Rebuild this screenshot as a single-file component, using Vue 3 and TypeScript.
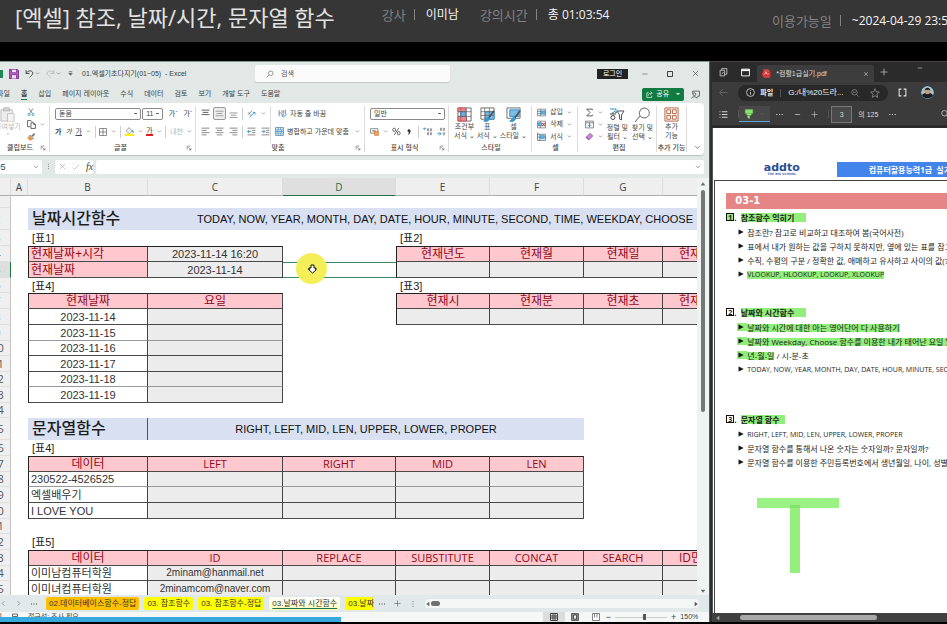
<script setup lang="ts">
import { h } from 'vue'

type Shape = [d: string, stroke: string, fill?: string, width?: number]

const dark = '#4a4d4c'
const blue = '#2f8fcb'
const light = '#d6d6d6'

const shapes: Record<string, Shape[]> = {
  save: [['M1 1h12l2 2v12H1z', '#8d3f9c', '#b569c3', 2], ['M4 1v5h8V1M4 15v-6h8v6', '#8d3f9c', '#f2e2f5', 1.5]],
  undo: [['M2 2v6h6M2 8c3-6 11-6 12-1 0 3-3 5-6 8', dark, 'none', 1.7]],
  redo: [['M14 2v6H8M14 8C11 2 3 2 2 7c0 3 3 5 6 8', '#b9bfbd', 'none', 1.7]],
  custom: [['M4 4h8', dark, 'none', 1.6], ['M4 8h8l-4 4z', dark, dark, 1]],
  search: [['M10 2a4.5 4.5 0 1 1-1 9 4.500 4.500 0 0 1 1-9zM6 10l-5 5', '#666', 'none', 1.3]],
  min: [['M1 8h14', '#333', 'none', 1.3]],
  max: [['M3 3h10v10H3z', '#222', 'none', 1.7]],
  close: [['M2 2l12 12M14 2L2 14', '#444', 'none', 1.4]],
  closeLight: [['M3 3l10 10M13 3L3 13', light, 'none', 1.5]],
  comment: [['M3 7V2h12v9h-3l-2 3', dark, 'none', 1.4], ['M6 5a2.500 2.500 0 1 1 0 5 2.500 2.500 0 0 1 0-5zM1 15c1-4 8-4 10 0', dark, 'none', 1.4]],
  share: [['M6 4H2v11h11v-4', '#fff', 'none', 1.5], ['M5 11c0-5 4-6 8-6M10 1l4 4-4 4', '#fff', 'none', 1.5]],
  paste: [['M1 3h12v12H1z', '#bdbdbd', '#ededed', 1], ['M4 1h6v3H4z', '#b0b0b0', '#ddd', 1], ['M8 7h7v9H8z', '#c2c2c2', '#f3f3f3', 1]],
  cut: [['M4 1l7 10M12 1L5 11', '#555', 'none', 1.3], ['M4 11a2 2 0 1 1-.1 4 2 2 0 0 1 .1-4zM12 11a2 2 0 1 1-.1 4 2 2 0 0 1 .1-4z', blue, 'none', 1.6]],
  copy: [['M6 12H1V1h6l3 3', '#444', 'none', 1.4], ['M7 5h5l3 3v7H7zM12 5v3h3', '#444', '#fff', 1.4]],
  brush: [['M10 5l4-4 1 2-3 4z', '#555', '#777', 1.3], ['M6 4l7 7-2 1-6-6z', '#555', '#fff', 1.2], ['M5 6l6 6-5 3-5-5z', '#c9722a', '#ef9b4d', 1]],
  border: [['M1 1h14v14H1zM8 1v14M1 8h14', '#555', 'none', 1.3]],
  fill: [['M7 1l6 6-5 5-6-5z', '#777', '#f4f4f4', 1.2], ['M13 6l2 4', blue, 'none', 2], ['M0 14h16', '#fff200', 'none', 4]],
  alignTop: [['M1 2h14M3 6h10M1 10h14', '#444', 'none', 1.5]],
  alignMid: [['M1 4h14M3 8h10M1 12h14', '#888', 'none', 1.3]],
  alignBot: [['M1 7h14M3 11h10M1 15h14', '#777', 'none', 1.3]],
  left: [['M1 2h14M1 6h9M1 10h14M1 14h9', '#555', 'none', 1.2]],
  center: [['M1 2h14M3 6h10M1 10h14M3 14h10', '#555', 'none', 1.2]],
  right: [['M1 2h14M6 6h9M1 10h14M6 14h9', '#555', 'none', 1.2]],
  orient: [['M2 10l7-7M5 12l3-3M2 6l3 3', '#666', 'none', 1.4], ['M5 15L14 6M14 10V6h-4', blue, 'none', 1.5]],
  indentL: [['M1 2h14M9 6h6M9 10h6M1 14h14', '#555', 'none', 1.2], ['M7 8H1M4 5L1 8l3 3', blue, 'none', 1.5]],
  indentR: [['M1 2h14M9 6h6M9 10h6M1 14h14', '#555', 'none', 1.2], ['M1 8h6M4 5l3 3-3 3', blue, 'none', 1.5]],
  wrap: [['M2 2v11M2 7h3M7 2v9M10 2v6M13 1v8', '#666', 'none', 1.3], ['M14 8c2 5-3 5-6 4M10 9l-3 3 3 3', blue, 'none', 1.6]],
  merge: [['M1 1h14v14H1z', '#4f7d9c', '#d9effb', 1.3], ['M1 5h14M1 11h14M6 1v4M10 1v4M6 11v4M10 11v4', '#4f7d9c', 'none', 1], ['M3 8h10M5 6L3 8l2 2M11 6l2 2-2 2', blue, 'none', 1.4]],
  money: [['M1 3h13v8H1z', '#666', '#fff', 1.3], ['M4 7h6', '#666', 'none', 2], ['M8 8h7v7H8z', '#c9722a', '#f0a050', 1]],
  percent: [['M4 2a2.500 3 0 1 1-.1 6 2.500 3 0 0 1 .1-6zM12 8a2.500 3 0 1 1-.1 6 2.500 3 0 0 1 .1-6zM12 2L4 14', '#444', 'none', 1.4]],
  comma: [['M8 3a2.500 2.500 0 0 1 2.500 3c0 4-2 6-4 7 1-2 2-3 1.500-5a2.500 2.500 0 0 1 0-5z', '#333', '#333', 1]],
  decInc: [['M8 3h2v4H8zM13 3h2v4h-2zM8 10h2v4H8zM13 10h2v4h-2z', '#666', 'none', 1.1], ['M6 3H1M3 1L1 3l2 2', blue, 'none', 1.5]],
  decDec: [['M8 2h2v4H8zM13 2h2v4h-2zM13 10h2v4h-2z', '#666', 'none', 1.1], ['M2 12h7M6 9l3 3-3 3', blue, 'none', 1.5]],
  cond: [['M1 1h14v14H1z', '#666', '#fff', 1], ['M1 1h8v4H1zM1 10h9v5H1z', '#e2525a', '#f4858b', 1], ['M4 5h5v5H4z', '#3d86c6', '#6cb0e4', 1], ['M1 5h14M1 10h14M4 1v14M10 1v14', '#666', 'none', .8]],
  tableFmt: [['M1 1h14v12H1z', '#666', '#fff', 1], ['M6 5h9v8H6z', blue, '#79bde9', 1], ['M1 5h14M1 9h14M5 1v12M10 1v12', '#666', 'none', .8], ['M15 4l-6 8', '#555', '#fff', 1.8], ['M9 11c-3 0-2 3-5 4 3 1 6 0 6-3z', blue, '#3c98d5', 1]],
  cellFmt: [['M1 1h14v11H1z', '#666', '#fff', 1], ['M4 3h10v7H4z', blue, '#79bde9', 1], ['M15 4l-6 8', '#555', '#fff', 1.8], ['M9 11c-3 0-2 3-5 4 3 1 6 0 6-3z', blue, '#3c98d5', 1]],
  insert: [['M1 2h14v12H1zM1 6h14M1 10h14M6 2v12', '#555', '#fff', 1.1], ['M7 5h8v6H7z', blue, '#5cb0e5', 1]],
  remove: [['M1 2h14v12H1zM1 6h14M1 10h14M6 2v12', '#555', '#fff', 1.1], ['M2 5h6v5H2z', blue, '#5cb0e5', 1], ['M9 5l6 6M15 5l-6 6', '#d33b3b', 'none', 1.6]],
  format: [['M1 1v14h14V4H1M5 4v11M1 9h14', '#555', 'none', 1.2], ['M6 6h7v6H6z', blue, '#5cb0e5', 1]],
  sum: [['M13 4V2H3l6 6-6 6h10v-2', '#444', 'none', 1.5]],
  fillDown: [['M1 2h14v12H1zM1 5h14', '#555', '#fff', 1.2], ['M8 5v7M5 9l3 3 3-3', blue, 'none', 1.7]],
  eraser: [['M9 2l5 5-7 7-5-5z', '#9b4fa8', '#c98bd2', 1.2], ['M2 9l5 5', '#9b4fa8', '#fff', 2]],
  sort: [['M1 2h6M7 2v3M5 4l2 2 2-2', blue, 'none', 1], ['M1 7h6M4 5v2M4 8.500a1.800 1.800 0 1 1-.1 4 1.800 1.800 0 0 1 .1-4z', '#444', 'none', 1], ['M8 4h7l-2.500 4v5l-2-1V8z', '#555', '#fff', 1]],
  find: [['M10 1a5 5 0 1 1-1 9.800A5 5 0 0 1 10 1zM6 9l-5 6', '#666', 'none', 1]],
  addin: [['M1 1h14v14H1z', '#b75c3c', '#fff', 1], ['M3 3h4v4H3zM9 3h4v4H9zM3 9h4v4H3zM9 9h4v4H9z', '#b75c3c', '#fff', 1]],
  launch: [['M3 12V3h9M6 6l7 7M13 8v5H8', '#555', 'none', 1.5]],
  check: [['M1 9l4 4L15 3', '#bbb', 'none', 1.4]],
  cancel: [['M2 2l12 12M14 2L2 14', '#aaa', 'none', 1.4]],
  chev: [['M3 5l5 5 5-5', '#666', 'none', 1.8]],
  prev: [['M10 3L5 8l5 5', '#777', 'none', 1.6]],
  next: [['M6 3l5 5-5 5', '#777', 'none', 1.6]],
  plus: [['M8 1v14M1 8h14', '#555', 'none', 1.3]],
  plusLight: [['M8 1v14M1 8h14', light, 'none', 1.3]],
  minusLight: [['M2 8h12', light, 'none', 1.6]],
  triL: [['M11 3v10L4 8z', '#666', '#666']],
  triLight: [['M11 3v10L4 8z', '#a9a9a9', '#a9a9a9']],
  triR: [['M5 3v10l7-5z', '#555', '#555']],
  triU: [['M3 11h10L8 4z', '#666', '#666']],
  triD: [['M3 5h10l-5 7z', '#666', '#666']],
  grid: [['M1 1h14v14H1zM1 6h14M1 10h14M6 1v14M10 1v14', '#333', '#eee', 1.8]],
  page: [['M1 1h14v14H1z', '#444', '#888', 1.5], ['M5 4h6v8H5z', '#333', '#eee', 1.5]],
  breaks: [['M1 1h14v14H1zM5 1v8M10 1v8', '#555', '#fff', 1.4]],
  work: [['M2 4h8v10H2zM5 4V1h9v10h-4', light, 'none', 1.4], ['M5 11l3-4', light, 'none', 1.4]],
  tabs: [['M1 2h14v12H1z', '#fff', 'none', 1.6], ['M1 4h14', '#fff', 'none', 3]],
  pdf: [['M3 1h8l3 3v11H3z', '#d94848', '#d94848'], ['M0 6h15v6H0z', '#c22a2a', '#d33'], ['M3 10c3-2 6-5 4-5s1 5 5 4', '#fff', 'none', 1.2]],
  back: [['M15 8H1M7 2L1 8l6 6', '#6d6d6d', 'none', 1.4]],
  info: [['M8 1a7 7 0 1 1-.1 14A7 7 0 0 1 8 1zM8 7v5M8 4v1.500', '#ececec', 'none', 1.3]],
  zoomOut: [['M7 1a5.500 5.500 0 1 1-.1 11A5.500 5.500 0 0 1 7 1zM11 11l4 4M4 6.500h6', '#999', 'none', 1.3]],
  star: [['M8 1l2 5 5 .500-4 3.500 1.500 5L8 12.300 3.500 15 5 10 1 6.500 6 6z', '#999', 'none', 1.2]],
  split: [['M6 2H2v12h4M10 2h4v12h-4', '#e6e6e6', 'none', 1.8]],
  list: [['M5 3h10M5 8h10M5 13h10M1 3h1.500M1 8h1.500M1 13h1.500', light, 'none', 1.8]],
  marker: [['M2 1h12v6H2z', '#6cc24f', '#8ce572', 1], ['M4 7h8l-1 3H5zM6 11h3v4l-3-1z', '#6cc24f', '#a7f08f', 1]],
  dots: [['M2 8h2M7 8h2M12 8h2', light, 'none', 2]],
  dotsDark: [['M2 8h2M7 8h2M12 8h2', '#444', 'none', 2]],
  dotsV: [['M8 2v2M8 7v2M8 12v2', '#777', 'none', 2]],
  find2: [['M7 1a5.500 5.500 0 1 1-.1 11A5.500 5.500 0 0 1 7 1zM11 11l4 4', light, 'none', 1.5]],
  tri: [['M2 2v12l12-6z', '#111', '#111']],
  person: [['M3 2h10v5H3zM2 14c0-5 12-5 12 0z', '#444', 'none', 1.5]],
}

const Ico = (props: { n: string; s?: number }) =>
  h(
    'svg',
    { class: 'ico', viewBox: '0 0 16 16', width: props.s ?? 8, height: props.s ?? 8, 'aria-hidden': 'true' },
    shapes[props.n].map(([d, stroke, fill, width]) =>
      h('path', { d, stroke, fill: fill ?? 'none', 'stroke-width': width ?? 1 })),
  )
Ico.props = ['n', 's']

interface Cell { t?: string; k?: string; span?: number }
interface Row { n: number; h: 'a' | 'b' | 'first' | 'title'; cells: Cell[] }

const columns = ['A', 'B', 'C', 'D', 'E', 'F', 'G', '']
const e: Cell = {}
const p = (t: string, extra = ''): Cell => ({ t, k: 'box pink ' + (/^[A-Z]+$/.test(t) ? 'latin ' : '') + extra })
const g = (t = '', extra = ''): Cell => ({ t, k: 'box gray ' + extra })
const w = (t: string, extra = ''): Cell => ({ t, k: 'box l ' + extra })
const cap = (t: string): Cell => ({ t, k: 'cap' })

const dateRow = (n: number, hh: 'a' | 'b', date: string, extra = ''): Row => ({
  n, h: hh, cells: [e, w(date, 'mid ' + extra), g('', extra), e, e, e, e, e],
})
const textRow = (n: number, hh: 'a' | 'b', text: string, extra = ''): Row => ({
  n, h: hh, cells: [e, w(text, extra), g('', extra), g('', extra), g('', extra), g('', extra), e, e],
})

const rows: Row[] = [
  { n: 1, h: 'first', cells: [e, e, e, e, e, e, e, e] },
  { n: 2, h: 'title', cells: [e, { t: '날짜시간함수', k: 'head' }, { t: 'TODAY, NOW, YEAR, MONTH, DAY, DATE, HOUR, MINUTE, SECOND, TIME, WEEKDAY, CHOOSE', k: 'fns', span: 6 }] },
  { n: 3, h: 'a', cells: [e, cap('[표1]'), e, e, cap('[표2]'), e, e, e] },
  { n: 4, h: 'a', cells: [e, p('현재날짜+시각', 'l t start'), g('2023-11-14 16:20', 't'), e, p('현재년도', 'l t'), p('현재월', 't'), p('현재일', 't'), p('현재', 't cut')] },
  { n: 5, h: 'a', cells: [e, p('현재날짜', 'l start'), g('2023-11-14'), { k: 'active' }, g('', 'l'), g(), g(), g()] },
  { n: 6, h: 'b', cells: [e, cap('[표4]'), e, e, cap('[표3]'), e, e, e] },
  { n: 7, h: 'a', cells: [e, p('현재날짜', 'l t'), p('요일', 't'), e, p('현재시', 'l t'), p('현재분', 't'), p('현재초', 't'), p('현재', 't cut')] },
  { n: 8, h: 'a', cells: [e, w('2023-11-14', 'mid'), g(), e, g('', 'l'), g(), g(), g()] },
  dateRow(9, 'a', '2023-11-15', 'soft'),
  dateRow(10, 'b', '2023-11-16'),
  dateRow(11, 'a', '2023-11-17'),
  dateRow(12, 'b', '2023-11-18', 'soft'),
  dateRow(13, 'a', '2023-11-19'),
  { n: 14, h: 'b', cells: [e, e, e, e, e, e, e, e] },
  { n: 15, h: 'title', cells: [e, { t: '문자열함수', k: 'head edge' }, { t: 'RIGHT, LEFT, MID, LEN, UPPER, LOWER, PROPER', k: 'fns', span: 4 }, e, e] },
  { n: 16, h: 'a', cells: [e, cap('[표4]'), e, e, e, e, e, e] },
  { n: 17, h: 'a', cells: [e, p('데이터', 'l t'), p('LEFT', 't'), p('RIGHT', 't'), p('MID', 't'), p('LEN', 't'), e, e] },
  textRow(18, 'b', '230522-4526525', 'soft'),
  textRow(19, 'a', '엑셀배우기'),
  textRow(20, 'a', 'I LOVE YOU'),
  { n: 21, h: 'b', cells: [e, e, e, e, e, e, e, e] },
  { n: 22, h: 'a', cells: [e, cap('[표5]'), e, e, e, e, e, e] },
  { n: 23, h: 'a', cells: [e, p('데이터', 'l t'), p('ID', 't'), p('REPLACE', 't'), p('SUBSTITUTE', 't'), p('CONCAT', 't'), p('SEARCH', 't'), p('ID민', 't cut')] },
  { n: 24, h: 'b', cells: [e, w('이미남컴퓨터학원'), g('2minam@hanmail.net', 'mail'), g(), g(), g(), g(), g()] },
  { n: 25, h: 'a', cells: [e, w('이미녀컴퓨터학원'), g('2minamcom@naver.com', 'mail'), g(), g(), g(), g(), g()] },
]

const menus = ['파일', '홈', '삽입', '페이지 레이아웃', '수식', '데이터', '검토', '보기', '개발 도구', '도움말']

interface Item { t: string; m?: string; all?: boolean }
const isLatin = (it: Item) => !/[가-힣]/.test(it.t + (it.m ?? ''))

const sections: { no: number; title: string; k: string; items: Item[] }[] = [
  {
    no: 1, title: '참조함수 익히기', k: 's1',
    items: [
      { t: '참조란? 참고로 비교하고 대조하여 봄(국어사전)' },
      { t: '표에서 내가 원하는 값을 구하지 못하지만, 옆에 있는 표를 참고' },
      { t: '수직, 수평의 구분 / 정확한 값, 애매하고 유사하고 사이의 값(?)' },
      { m: 'VLOOKUP, HLOOKUP, LOOKUP, XLOOKUP', t: '' },
    ],
  },
  {
    no: 2, title: '날짜와 시간함수', k: 's2',
    items: [
      { m: '날짜와 시간에 대한 아는 영어단어 다 사용하기', t: '', all: true },
      { m: '날짜와 Weekday, Choose 함수를 이용한 내가 태어난 요일 알아', t: '', all: true },
      { m: '년-월-일', t: ' / 시-분-초', all: true },
      { t: 'TODAY, NOW, YEAR, MONTH, DAY, DATE, HOUR, MINUTE, SECOND' },
    ],
  },
  {
    no: 3, title: '문자열 함수', k: 's3',
    items: [
      { t: 'RIGHT, LEFT, MID, LEN, UPPER, LOWER, PROPER' },
      { t: '문자열 함수를 통해서 나온 숫자는 숫자일까? 문자일까?' },
      { t: '문자열 함수를 이용한 주민등록번호에서 생년월일, 나이, 성별 알' },
    ],
  },
]
</script>

<template>
  <div class="player">
    <header class="top">
      <h1>[엑셀] 참조, 날짜/시간, 문자열 함수</h1>
      <dl class="meta">
        <div><dt>강사</dt><dd>이미남</dd></div>
        <div><dt>강의시간</dt><dd>총 01:03:54</dd></div>
      </dl>
      <dl class="meta until">
        <div><dt>이용가능일</dt><dd>~2024-04-29 23:59</dd></div>
      </dl>
    </header>

    <main class="stage">
      <section class="excel">
        <div class="titlebar">
          <span class="app-mark"></span>
          <button aria-label="저장"><Ico n="save" :s="10" /></button>
          <button aria-label="실행 취소"><Ico n="undo" :s="9" /><Ico n="chev" :s="5" /></button>
          <button aria-label="다시 실행"><Ico n="redo" :s="9" /><Ico n="chev" :s="5" /></button>
          <button aria-label="도구 모음 설정"><Ico n="custom" :s="7" /></button>
          <span class="file">01.엑셀기초다지기(01~05) &nbsp;- Excel</span>
          <label class="search"><Ico n="search" :s="8" /><input type="text" placeholder="검색" aria-label="검색" /></label>
          <button class="login">로그인</button>
          <div class="win">
            <button aria-label="최소화"><Ico n="min" :s="6" /></button>
            <button aria-label="최대화"><Ico n="max" :s="8" /></button>
            <button aria-label="닫기"><Ico n="close" :s="7" /></button>
          </div>
        </div>

        <nav class="menus">
          <a v-for="m in menus" :key="m" href="#" :class="{ on: m === '홈' }">{{ m }}</a>
          <button class="share"><Ico n="share" :s="7" />공유<i></i></button>
          <button aria-label="메모"><Ico n="comment" :s="9" /></button>
        </nav>

        <div class="ribbon">
          <div class="group clip">
            <div class="body">
              <button class="big faded"><Ico n="paste" :s="15" /><span>붙여넣기</span><Ico n="chev" :s="4" /></button>
              <div class="stack">
                <button aria-label="잘라내기"><Ico n="cut" :s="8" /></button>
                <button aria-label="복사"><Ico n="copy" :s="9" /><Ico n="chev" :s="5" /></button>
                <button aria-label="서식 복사"><Ico n="brush" :s="8" /></button>
              </div>
            </div>
            <div class="label"><b>클립보드</b><Ico n="launch" :s="6" /></div>
          </div>

          <div class="group font">
            <div class="body lines">
              <div class="line">
                <select class="wide" aria-label="글꼴"><option>돋움</option></select>
                <select class="size" aria-label="글꼴 크기"><option>11</option></select>
                <button>가<sup>ˆ</sup></button>
                <button>가<sup>ˇ</sup></button>
              </div>
              <div class="line spread">
                <button class="bold">가</button>
                <button class="ital">가</button>
                <button class="under">가</button>
                <Ico n="chev" :s="5" /><s></s>
                <button aria-label="테두리"><Ico n="border" :s="8" /></button><Ico n="chev" :s="5" /><s></s>
                <button aria-label="채우기 색"><Ico n="fill" :s="9" /></button><Ico n="chev" :s="5" />
                <button class="red">가</button><Ico n="chev" :s="5" /><s></s>
                <button class="faded">내천</button><Ico n="chev" :s="5" />
              </div>
            </div>
            <div class="label"><b>글꼴</b><Ico n="launch" :s="6" /></div>
          </div>

          <div class="group align">
            <div class="body">
              <div class="lines">
                <div class="line icons">
                  <button aria-label="위쪽 맞춤"><Ico n="alignTop" :s="9" /></button>
                  <button class="pressed" aria-label="가운데 맞춤"><Ico n="alignMid" :s="9" /></button>
                  <button aria-label="아래쪽 맞춤"><Ico n="alignBot" :s="9" /></button><s></s>
                  <button aria-label="방향"><Ico n="orient" :s="9" /></button>
                  <Ico n="chev" :s="5" />
                </div>
                <div class="line icons">
                  <button aria-label="왼쪽 맞춤"><Ico n="left" :s="9" /></button>
                  <button aria-label="가로 가운데"><Ico n="center" :s="9" /></button>
                  <button aria-label="오른쪽 맞춤"><Ico n="right" :s="9" /></button><s></s>
                  <button aria-label="내어쓰기"><Ico n="indentL" :s="9" /></button>
                  <button aria-label="들여쓰기"><Ico n="indentR" :s="9" /></button>
                </div>
              </div>
              <div class="lines rule">
                <button class="line"><Ico n="wrap" :s="9" />자동 줄 바꿈</button>
                <button class="line"><Ico n="merge" :s="9" />병합하고 가운데 맞춤<Ico n="chev" :s="5" /></button>
              </div>
            </div>
            <div class="label"><b>맞춤</b><Ico n="launch" :s="6" /></div>
          </div>

          <div class="group number">
            <div class="body lines">
              <div class="line"><select class="fmt" aria-label="표시 형식"><option>일반</option></select></div>
              <div class="line spread">
                <button aria-label="회계"><Ico n="money" :s="9" /></button><Ico n="chev" :s="5" />
                <button aria-label="백분율"><Ico n="percent" :s="9" /></button>
                <button aria-label="쉼표"><Ico n="comma" :s="8" /></button><s></s>
                <button aria-label="자릿수 늘림"><Ico n="decInc" :s="9" /></button>
                <button aria-label="자릿수 줄임"><Ico n="decDec" :s="9" /></button>
              </div>
            </div>
            <div class="label"><b>표시 형식</b><Ico n="launch" :s="6" /></div>
          </div>

          <div class="group styles">
            <div class="body">
              <button class="big"><Ico n="cond" :s="15" /><span>조건부</span><span>서식 ⌄</span></button>
              <button class="big"><Ico n="tableFmt" :s="15" /><span>표</span><span>서식 ⌄</span></button>
              <button class="big"><Ico n="cellFmt" :s="15" /><span>셀</span><span>스타일 ⌄</span></button>
            </div>
            <div class="label"><b>스타일</b></div>
          </div>

          <div class="group cells">
            <div class="body stack">
              <button><Ico n="insert" :s="9" />삽입<Ico n="chev" :s="5" /></button>
              <button><Ico n="remove" :s="9" />삭제<Ico n="chev" :s="5" /></button>
              <button><Ico n="format" :s="9" />서식<Ico n="chev" :s="5" /></button>
            </div>
            <div class="label"><b>셀</b></div>
          </div>

          <div class="group edit">
            <div class="body">
              <div class="stack">
                <button aria-label="합계"><Ico n="sum" :s="9" /><Ico n="chev" :s="5" /></button>
                <button aria-label="채우기"><Ico n="fillDown" :s="9" /><Ico n="chev" :s="5" /></button>
                <button aria-label="지우기"><Ico n="eraser" :s="9" /><Ico n="chev" :s="5" /></button>
              </div>
              <button class="big"><Ico n="sort" :s="16" /><span>정렬 및</span><span>필터 ⌄</span></button>
              <button class="big"><Ico n="find" :s="16" /><span>찾기 및</span><span>선택 ⌄</span></button>
            </div>
            <div class="label"><b>편집</b></div>
          </div>

          <div class="group addins">
            <div class="body"><button class="big"><Ico n="addin" :s="15" /><span>추가</span><span>기능</span></button></div>
            <div class="label"><b>추가 기능</b></div>
          </div>
          <button class="fold" aria-label="리본 축소"><Ico n="chev" :s="7" /></button>
        </div>

        <div class="formula">
          <label class="namebox"><input type="text" value="D5" aria-label="이름 상자" /><Ico n="chev" :s="6" /></label>
          <Ico n="dotsV" :s="7" />
          <div class="fx"><Ico n="cancel" :s="7" /><Ico n="check" :s="8" /><em>fx</em></div>
          <label class="entry"><input type="text" aria-label="수식" /><Ico n="chev" :s="6" /></label>
        </div>

        <div class="sheet">
          <div class="grid">
            <table>
              <colgroup><col class="cn" /><col class="ca" /><col class="cb" /><col class="cc" /><col class="cd" /><col class="ce" /><col class="ce" /><col class="cg" /><col class="cg" /></colgroup>
              <thead>
                <tr><th class="corner"></th><th v-for="c in columns" :key="c" :class="{ sel: c === 'D' }">{{ c }}</th></tr>
              </thead>
              <tbody>
                <tr v-for="r in rows" :key="r.n" :class="'h-' + r.h">
                  <th :class="{ sel: r.n === 5 }">{{ r.n }}</th>
                  <td v-for="(c, i) in r.cells" :key="i" :colspan="c.span" :class="c.k">
                    <template v-if="c.k === 'active'">
                      <span class="spot"><svg viewBox="0 0 10 10" width="10" height="10" aria-hidden="true"><path d="M4 1h3v3h2v2L5.500 9 2 6V4h2z" fill="#fff" stroke="#111" stroke-width="1" /><path d="M1 5h2M8 5h1" stroke="#111" /></svg></span>
                    </template>
                    <template v-else>{{ c.t }}</template>
                  </td>
                </tr>
              </tbody>
            </table>
          </div>
          <div class="vbar"><Ico n="triU" :s="6" /><i></i><Ico n="triD" :s="6" /></div>
        </div>

        <div class="tabs">
          <Ico n="prev" :s="7" /><Ico n="next" :s="7" /><Ico n="dotsDark" :s="8" />
          <div class="names">
            <button class="orange">02.데이터베이스함수-정답</button>
            <button>03. 참조함수</button>
            <button>03. 참조함수-정답</button>
            <button class="current">03.날짜와 시간함수</button>
            <button class="part">03.날짜</button>
          </div>
          <Ico n="dotsDark" :s="8" /><Ico n="plus" :s="7" /><Ico n="dotsV" :s="8" />
          <div class="hbar"><Ico n="triL" :s="6" /><i></i><Ico n="triR" :s="6" /></div>
        </div>

        <div class="status">
          <span class="ready">준비</span><Ico n="person" :s="8" /><span>접근성: 조사 필요</span>
          <div class="views">
            <span class="picked"><Ico n="grid" :s="8" /></span><Ico n="page" :s="8" /><Ico n="breaks" :s="8" />
          </div>
          <label class="zoom">−<input type="range" min="0" max="100" value="58" aria-label="확대/축소" />+<span>150%</span></label>
        </div>
      </section>

      <section class="viewer">
        <div class="strip">
          <Ico n="work" :s="9" /><Ico n="tabs" :s="9" />
          <div class="tab"><Ico n="pdf" :s="9" /><span>*컴활1급실기.pdf</span><Ico n="closeLight" :s="6" /></div>
          <button aria-label="새 탭"><Ico n="plusLight" :s="8" /></button>
          <button class="minw" aria-label="최소화"><Ico n="minusLight" :s="6" /></button>
        </div>
        <div class="address">
          <button aria-label="뒤로"><Ico n="back" :s="9" /></button>
          <div class="url"><Ico n="info" :s="9" /><b>파일</b><s></s><span>G:/내%20드라...</span><Ico n="zoomOut" :s="8" /><Ico n="star" :s="10" /></div>
          <Ico n="split" :s="9" />
          <svg class="face" viewBox="0 0 14 14" width="13" height="13" aria-hidden="true"><circle cx="7" cy="7" r="7" fill="#9fc4cf" /><path d="M1 10c3-4 9-4 12 0a7 7 0 0 1-12 0z" fill="#191b20" /><circle cx="7" cy="6" r="3" fill="#c89576" /><path d="M4 5c0-4 6-4 6 0L9 4H5z" fill="#1b1715" /></svg>
        </div>
        <div class="tools">
          <Ico n="list" :s="9" /><s></s>
          <button class="marker" aria-label="강조 표시"><Ico n="marker" :s="10" /><Ico n="chev" :s="6" /></button>
          <Ico n="dots" :s="9" /><Ico n="minusLight" :s="7" /><Ico n="plusLight" :s="7" /><s></s>
          <input type="text" value="3" aria-label="페이지" /><span>의 125</span><Ico n="dots" :s="9" />
          <Ico class="seek" n="find2" :s="8" />
        </div>

        <div class="doc">
          <div class="brand">
            <div class="logo">addto<small>THE BIG SCHOOL</small></div>
            <div class="banner">컴퓨터활용능력1급 &nbsp;실기</div>
          </div>
          <article class="paper">
            <h2>03-1</h2>
            <section v-for="s in sections" :key="s.no" :class="s.k">
              <h3><i :class="{ hit: s.no === 1 }">{{ s.no }}</i>. &nbsp;<mark>{{ s.title }}</mark></h3>
              <ul>
                <li v-for="it in s.items" :key="it.t + it.m" :class="{ latin: isLatin(it) }">
                  <span :class="{ hit: it.all }"><Ico n="tri" :s="6" /></span>
                  <p><mark v-if="it.m">{{ it.m }}</mark>{{ it.t }}</p>
                </li>
              </ul>
            </section>
            <svg class="tee" viewBox="0 0 82 75" width="82" height="75" aria-hidden="true"><path d="M33 7h10v68H33z" fill="#94ef7c" /><path d="M0 0h82v10H0z" fill="#9af284" /><path d="M33 7h10v3H33z" fill="#84e26c" /></svg>
          </article>
        </div>
        <div class="pdfbar"><Ico n="triLight" :s="6" /><i></i></div>
      </section>
      <div class="played"></div>
    </main>
  </div>
</template>

<style>
body { margin: 0; background: #000; overflow: hidden; }
</style>

<style scoped>
* { box-sizing: border-box; }
button, input, select { font: inherit; color: inherit; border: 0; padding: 0; margin: 0; background: none; min-width: 0; }
button { display: flex; align-items: center; white-space: nowrap; }
a { color: inherit; text-decoration: none; }
.ico { display: block; flex: none; }
i { font-style: normal; }

.player { height: 100vh; display: flex; flex-direction: column; overflow: hidden; background: #000; font-family: "Liberation Sans", "Noto Sans CJK KR", sans-serif; }
.top { flex: none; height: 42px; padding: 0 0 0 15px; display: flex; align-items: flex-start; background: #363636; font-family: "Open Sans", "Noto Sans CJK KR", sans-serif; color: #fff; white-space: nowrap; }
.top h1 { margin: 3px 47px 0 0; font-size: 22px; line-height: 28px; font-weight: 400; color: #e2e2e2; }
.meta { margin: 5px 0 0; display: flex; gap: 21px; font-size: 12px; line-height: 20px; }
.meta div { display: flex; }
.meta dt { color: #828282; font-size: 13px; }
.meta dt::after { content: ""; display: inline-block; width: 1px; height: 11px; margin: 0 11px 0 8px; background: #858585; }
.meta dd { margin: 0; color: #f4f4f4; }
.until { margin: 11px -8px 0 auto; }

.stage { position: relative; flex: 1; min-height: 0; margin: 19px 0 2px; display: grid; grid-template-columns: 3fr 1fr; }
.played { position: absolute; left: 0; bottom: 0; width: 36%; height: 5px; background: #37a9df; }

.excel { min-width: 0; min-height: 0; display: flex; flex-direction: column; border-top: 1px solid #7d9b93; border-right: 1px solid #3c6b5c; background: #e1e8e6; color: #3c3f3e; font-size: 7px; line-height: 8px; overflow: hidden; }
.titlebar { flex: none; height: 23px; display: flex; align-items: center; gap: 6px; padding-right: 10px; white-space: nowrap; }
.titlebar button { gap: 1px; }
.app-mark { width: 3px; height: 8px; background: #1f8a57; }
.file { margin-left: 2px; width: 167px; font-size: 7px; }
.search { flex: 0 1 195px; height: 17px; display: flex; align-items: center; gap: 7px; padding-left: 11px; background: #fafafa; border-radius: 2px; box-shadow: 0 1px 1px #c2c7c5; }
.search input { width: 100px; }
.search input::placeholder { color: #555; }
.titlebar .login { margin-left: auto; height: 10px; padding: 0 6px; background: #222; color: #fff; font-size: 7px; }
.win { display: flex; gap: 18px; margin-left: 8px; }

.menus { flex: none; height: 18px; display: flex; align-items: center; gap: 11px; padding-right: 9px; margin-left: -3px; white-space: nowrap; color: #3d403f; }
.menus a { padding: 2px 0 1px; border-bottom: 1px solid transparent; }
.menus a.on { font-weight: 700; border-color: #217346; }
.share { margin-left: auto; height: 13px; gap: 3px; padding: 0 4px; border-radius: 2px; background: #107c41; color: #fff; }
.share i { margin-left: 4px; border: 2px solid transparent; border-top-color: #fff; border-bottom: 0; }
.menus .share + button { margin-left: -4px; }

.ribbon { flex: none; height: 52px; margin-right: 5px; display: flex; background: #fff; border-radius: 0 4px 4px 0; box-shadow: 0 1px 1px #bcc4c1; color: #444; }
.group { flex: none; display: flex; flex-direction: column; margin: 3px 0; border-right: 1px solid #dcdcdc; padding: 0 3px 0 5px; }
.body { flex: 1; display: flex; min-height: 0; }
.label { height: 9px; display: flex; align-items: center; position: relative; }
.label b { flex: 1; text-align: center; font-weight: 500; white-space: nowrap; }
.lines { display: flex; flex-direction: column; gap: 3px; }
.line { height: 15px; display: flex; align-items: center; gap: 3px; }
.spread { justify-content: space-between; }
.stack { display: flex; flex-direction: column; justify-content: space-around; }
.stack button { gap: 4px; height: 12px; }
.big { flex-direction: column; align-items: center; gap: 1px; padding-top: 1px; }
.big span { line-height: 8px; }
.faded { color: #b5b5b5; }
.line s, .tools s, .url s { width: 1px; height: 12px; background: #ccc; }
.clip { width: 50px; padding-left: 0; }
.clip .body { gap: 6px; }
.clip .big { margin-left: -5px; }
.font { width: 146px; }
.font select, .fmt { appearance: none; height: 12px; padding: 0 3px; border: 1px solid #8a8a8a; border-radius: 2px; background: linear-gradient(#666, #666) right 3px center / 3px 1px no-repeat; }
.wide { width: 88px; }
.size { width: 21px; margin-left: -2px; }
.font .line:first-child button { margin-left: 3px; }
.font sup { font-size: 7px; line-height: 4px; color: #2f8fcb; }
.bold { font-weight: 700; }
.ital { font-style: italic; }
.under { text-decoration: underline; }
.red { border-bottom: 2px solid #e01b24; line-height: 7px; }
.align { width: 169px; }
.icons { gap: 5px; }
.icons .pressed { margin: 0 -2px; padding: 1px; border: 1px solid #999; border-radius: 2px; background: #ededed; }
.icons s { margin: 0 -1px; }
.rule { margin-left: auto; padding: 0 2px 0 4px; border-left: 1px solid #ddd; }
.rule .ico:last-child { margin-left: 3px; }
.number { width: 84px; }
.fmt { width: 75px; }
.styles { width: 83px; }
.styles .body { justify-content: space-between; padding-right: 1px; }
.cells { width: 46px; }
.edit { width: 79px; padding-left: 7px; }
.edit .body { justify-content: space-between; }
.addins { width: 30px; padding: 0; }
.addins .body { justify-content: center; }
.addins .label b { margin: 0 -4px; }
.fold { align-self: flex-end; margin: 0 0 4px 7px; }

.formula { flex: none; height: 23px; display: flex; align-items: center; gap: 3px; padding-right: 5px; }
.formula label, .fx { height: 14px; display: flex; align-items: center; background: #fff; border-radius: 2px; }
.namebox { width: 42px; justify-content: space-between; padding-right: 3px; }
.namebox input { width: 26px; margin-left: -6px; font-size: 9px; }
.fx { width: 38px; gap: 6px; padding-left: 4px; }
.fx em { font: italic 400 10px "Liberation Serif", serif; }
.formula .entry { flex: 1; padding-right: 3px; }
.entry input { flex: 1; }

.sheet { flex: 1; min-height: 0; display: flex; overflow: hidden; }
.grid { flex: 1; min-width: 0; overflow: hidden; background: #fff; }
table { width: 757px; margin-left: -15px; table-layout: fixed; border-collapse: separate; border-spacing: 0; font-size: 11px; line-height: 13px; color: #333; }
.cn { width: 26px; } .ca { width: 17px; } .cb { width: 120px; } .cc { width: 135px; } .cd { width: 113px; } .ce { width: 94px; } .cg { width: 79px; }
th, td { padding: 0; white-space: nowrap; overflow: hidden; }
thead th { height: 18px; font: 400 10px/14px "Open Sans", sans-serif; color: #444; background: #efefef; border-right: 1px solid #dcdcdc; border-bottom: 1px solid #a9acab; }
thead th.sel { background: #dedfde; color: #217346; border-bottom-color: #217346; }
tbody th { font: 400 11px/12px "Open Sans", sans-serif; color: #555; background: #efefef; border-right: 1px solid #c4c4c4; border-bottom: 1px solid #dedede; }
tbody th.sel { background: #dcdfdd; border-right-color: #217346; }
.h-a { height: 16px; } .h-b { height: 15px; } .h-first { height: 12px; } .h-title { height: 22px; }
.h-first th { line-height: 11px; }
.h-a td, .h-b td { line-height: 12px; }
.head { padding-left: 4px; background: #d9e0f2; font-size: 16px; line-height: 20px; font-weight: 500; color: #1d1d1d; }
.edge { border-right: 1px solid #555; }
.fns { background: #d9e0f2; font-size: 11px; line-height: 20px; color: #111; text-align: center; }
.cap { padding-left: 4px; color: #222; }
.box { border-right: 1px solid #444; border-bottom: 1px solid #4a4a4a; padding-left: 2px; }
.box.soft { border-bottom-color: #999; }
.l { border-left: 1px solid #222; }
.t { border-top: 1px solid #222; }
.pink { background: #ffc7ce; color: #8f0b1c; font: 400 12px/13px "Open Sans", "Noto Sans CJK KR", sans-serif; text-align: center; padding: 0; }
.pink.latin { font-size: 11px; }
.gray { background: #ececec; text-align: center; padding: 0; }
.mail { font-size: 10px; }
.mid { text-align: center; padding: 0; }
.start { text-align: left; padding-left: 2px; }
.cut { text-align: left; padding-left: 16px; }
.active { position: relative; overflow: visible; border: solid #3b8a62; border-width: 1px 0; }
.spot { position: absolute; z-index: 1; left: 13px; top: -10px; width: 31px; height: 31px; border-radius: 50%; background: #f4ee59; display: flex; align-items: center; justify-content: center; }
.vbar { width: 12px; display: flex; flex-direction: column; align-items: center; padding: 3px 0 1px; background: #f1f2f2; }
.vbar i { width: 4px; height: 222px; margin: 3px 0 auto; border-radius: 2px; background: #747776; }

.tabs { flex: none; height: 17px; display: flex; align-items: center; gap: 8px; padding-right: 10px; background: #e0e8e9; }
.names { display: flex; gap: 5px; height: 13px; font-size: 8px; margin-right: -4px; }
.names button { padding: 0 3px; background: #ff0; border-radius: 2px; color: #333; }
.names .orange { background: #ffc000; }
.names .current { background: linear-gradient(#fff, #ffffb8); text-decoration: underline #217346 1px; text-underline-offset: 2px; }
.names .part { width: 29px; overflow: hidden; }
.hbar { flex: 1; height: 9px; display: flex; align-items: center; background: #f4f5f5; border-radius: 4px; }
.hbar i { width: 9px; height: 5px; border-radius: 3px; background: #6e7171; margin-right: auto; }
.status { flex: none; height: 10px; display: flex; align-items: center; gap: 9px; padding-right: 11px; background: #f5f6f6; }
.ready { margin-left: -11px; }
.views { margin-left: auto; display: flex; align-items: center; gap: 13px; }
.picked { padding: 1px 7px; background: #dcdcdc; margin-right: -7px; }
.zoom { display: flex; align-items: center; gap: 4px; margin-left: -3px; font-size: 9px; }
.zoom span { font-size: 7px; }
.zoom input { appearance: none; width: 52px; height: 1px; background: #ccc; }
.zoom input::-webkit-slider-thumb { appearance: none; width: 3px; height: 6px; background: #555; }

.viewer { min-width: 0; min-height: 0; display: flex; flex-direction: column; border-left: 2px solid #2b302e; background: #2a2a2a; border-top: 1px solid #4d4147; color: #dcdcdc; font-size: 7px; line-height: 9px; white-space: nowrap; overflow: hidden; }
.strip { flex: none; height: 20px; display: flex; align-items: center; gap: 13px; padding-left: 7px; background: #2b2b2b; }
.tab { width: 117px; height: 17px; align-self: flex-end; margin-right: -7px; margin-left: -6px; display: flex; align-items: center; gap: 5px; padding: 0 5px; border-radius: 3px 3px 0 0; background: #3d3d3d; }
.tab span { flex: 1; }
.minw { margin: 0 24px 8px auto; }
.address { flex: none; height: 21px; display: flex; align-items: center; gap: 10px; padding-left: 7px; background: #3b3b3b; }
.url { width: 150px; height: 16px; display: flex; align-items: center; gap: 5px; padding: 0 8px; border-radius: 8px; background: #282828; color: #f2f2f2; }
.url span { flex: 1; font-size: 8px; }
.url .ico + .ico { margin-left: 6px; }
.url s { height: 8px; background: #555; margin: 0 2px; }
.address .face { margin-left: 4px; border-radius: 50%; }
.tools { flex: none; height: 23px; display: flex; align-items: center; gap: 10px; padding-left: 7px; background: #3b3b3b; border-bottom: 1px solid #2c2c2c; }
.tools s { background: #555; height: 8px; margin-right: -8px; }
.marker { align-self: stretch; width: 31px; margin: 3px -5px 3px -2px; padding: 0 5px; justify-content: space-between; background: #484848; border-bottom: 1px solid #5fa3da; }
.tools input { width: 21px; height: 17px; text-align: center; border: 1px solid #777; background: #4a4a4a; font-size: 7px; }
.tools > span { font-size: 7px; margin-left: -4px; }
.seek { margin: 0 -2px 0 auto; }

.doc { flex: 1; min-height: 0; display: flex; flex-direction: column; margin-top: 2px; padding: 0 0 0 1px; border-left: 1px solid #555; background: #fff; color: #1c1c1c; overflow: hidden; font-family: "Open Sans", "Noto Sans CJK KR", sans-serif; }
.brand { flex: none; height: 52px; display: flex; justify-content: space-between; align-items: flex-end; padding: 0 0 3px 48px; }
.logo { width: 39px; margin-bottom: 1px; color: #2b4c92; font: 700 11px/11px "DejaVu Sans", sans-serif; text-align: center; }
.logo small { display: block; font-size: 3px; line-height: 3px; color: #4a6bb0; }
.banner { flex: 0 0 110px; height: 15px; padding-left: 32px; margin-right: -4px; background: #4384ec; color: #fff; font-size: 8px; line-height: 15px; font-weight: 700; }
.paper { flex: 1; min-height: 0; border: solid #444; border-width: 1px 0 0 1px; padding: 12px 0 0 11px; overflow: hidden; }
h2 { margin: 0; height: 16px; padding-left: 9px; background: #e58586; color: #fff; font: 700 10px/16px "DejaVu Sans", sans-serif; }
h3 { margin: 0; height: 16px; display: flex; align-items: center; font-size: 8px; line-height: 9px; font-weight: 700; }
h3 i { width: 8px; height: 8px; display: flex; align-items: center; justify-content: center; border: 1px solid #111; font-size: 7px; }
.hit, mark { background: #93ef7c; color: inherit; }
h3 mark { padding-right: 12px; }
ul { list-style: none; margin: 0; padding: 0 0 0 11px; }
li { height: 14px; display: flex; align-items: center; font-size: 8px; }
li.latin { font-size: 7px; }
li span { flex: none; height: 8px; width: 10px; padding: 1px 0 0 1px; }
li p { margin: 0; }
li mark { display: inline-block; line-height: 8px; height: 8px; }
.s2 { margin-top: 23px; } .s3 { margin-top: 35px; }
.s3 h3 mark { padding-right: 5px; }
.tee { display: block; margin: 29px 0 0 31px; }
.pdfbar { flex: none; height: 9px; display: flex; align-items: center; padding-left: 3px; background: #404040; }
.pdfbar i { width: 137px; height: 5px; margin-left: 19px; border-radius: 3px; background: #a9a9a9; }
</style>
